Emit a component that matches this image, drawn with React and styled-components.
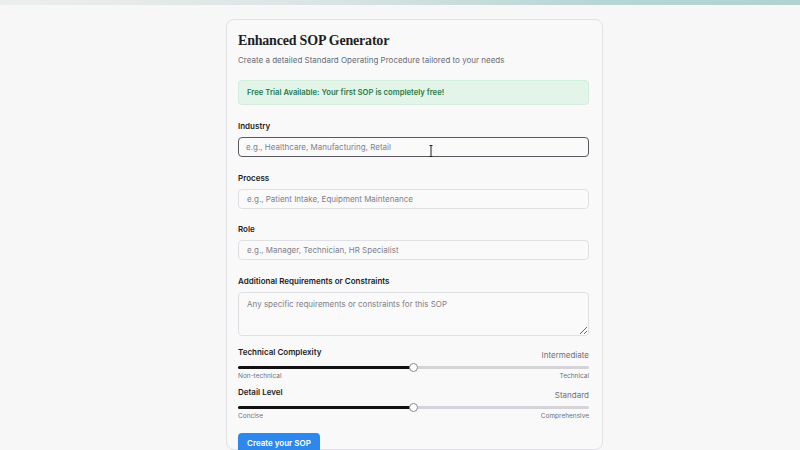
import React from "react";
import styled, { createGlobalStyle } from "styled-components";

const GlobalStyle = createGlobalStyle`
  html, body {
    margin: 0;
    padding: 0;
    background: #f7f7f8;
    font-family: Inter, "Liberation Sans", sans-serif;
    color: #1c1c1f;
  }
  * { box-sizing: border-box; }
`;

const TopBand = styled.div`
  height: 5px;
  background: linear-gradient(90deg, #eceeee 0%, #d9e5e4 40%, #b6d6d4 75%, #b0d3d1 100%);
`;

const Page = styled.div`
  display: flex;
  justify-content: center;
  padding-top: 14px;
  height: 445px;
  overflow: hidden;
`;

const Card = styled.div`
  width: 377px;
  margin-left: 29px;
  background: #f9f9fa;
  border: 1px solid #e2e2e6;
  border-radius: 8px;
  padding: 11px 13px 20px 11px;
  position: relative;
`;

const Title = styled.h1`
  margin: 0;
  font-family: "Liberation Serif", serif;
  font-size: 14px;
  font-weight: bold;
  line-height: 20px;
  letter-spacing: -0.2px;
  color: #1f1f22;
`;

const Subtitle = styled.p`
  margin: 3px 0 0 0;
  font-size: 8px;
  line-height: 12px;
  color: #6b6b72;
`;

const Notice = styled.div`
  margin-top: 14px;
  height: 25px;
  display: flex;
  align-items: center;
  padding: 0 8px;
  background: #e3f5e8;
  border: 1px solid #d2eddb;
  border-radius: 4px;
  font-size: 7.7px;
  font-weight: 600;
  color: #2b7a4b;
`;

const Field = styled.div`
  display: flex;
  flex-direction: column;
  margin-top: ${(p) => p.top || 14.5}px;
`;

const Label = styled.label`
  font-size: 8px;
  font-weight: 600;
  line-height: 12px;
  margin-bottom: 5px;
  color: #1c1c1f;
`;

const Input = styled.input`
  height: 20px;
  width: 100%;
  border: ${(p) => (p.focused ? "1.5px solid #58585e" : "1px solid #e0e0e4")};
  border-radius: 4px;
  background: #fafafb;
  padding: 0 ${(p) => (p.focused ? 7 : 8)}px;
  font-family: Inter, "Liberation Sans", sans-serif;
  font-size: 8px;
  color: #1c1c1f;
  outline: none;
  &::placeholder { color: #808087; }
`;

const TextArea = styled.textarea`
  height: 44px;
  width: 100%;
  border: 1px solid #e0e0e4;
  border-radius: 4px;
  background: #fafafb;
  padding: 5px 8px;
  font-family: Inter, "Liberation Sans", sans-serif;
  font-size: 8px;
  line-height: 12px;
  outline: none;
  resize: vertical;
  &::placeholder { color: #808087; }
`;

const SliderBlock = styled.div`
  margin-top: ${(p) => p.top}px;
`;

const SliderHead = styled.div`
  display: flex;
  justify-content: space-between;
  align-items: flex-start;
`;

const SliderLabel = styled.span`
  font-size: 8px;
  font-weight: 600;
  line-height: 12px;
`;

const SliderValue = styled.span`
  font-size: 8px;
  line-height: 12px;
  margin-top: 3px;
  color: #6f6f76;
`;

const Track = styled.div`
  position: relative;
  height: 3px;
  margin-top: 5px;
  background: #d4d4d8;
  border-radius: 2px;
`;

const Fill = styled.div`
  height: 100%;
  background: #111113;
  border-radius: 2px;
`;

const Thumb = styled.div`
  position: absolute;
  top: 50%;
  width: 9px;
  height: 9px;
  margin-left: -4.5px;
  margin-top: -4.5px;
  border-radius: 50%;
  background: #ffffff;
  border: 1px solid #8a8a90;
`;

const Ends = styled.div`
  display: flex;
  justify-content: space-between;
  margin-top: 2px;
  font-size: 6.5px;
  line-height: 10px;
  color: #6f6f76;
`;

const Button = styled.button`
  margin-top: 12px;
  height: 21px;
  padding: 0 9px;
  border: none;
  border-radius: 4px;
  background: #2e88ec;
  color: #ffffff;
  font-family: Inter, "Liberation Sans", sans-serif;
  font-size: 8px;
  font-weight: 600;
`;

const Caret = styled.span`
  position: absolute;
  left: 202px;
  top: 121px;
  width: 4px;
  height: 12px;
`;

function Slider({ label, value, percent, min, max, top }) {
  return (
    <SliderBlock top={top}>
      <SliderHead>
        <SliderLabel>{label}</SliderLabel>
        <SliderValue>{value}</SliderValue>
      </SliderHead>
      <Track>
        <Fill style={{ width: `${percent}%` }} />
        <Thumb style={{ left: `${percent}%` }} />
      </Track>
      <Ends>
        <span>{min}</span>
        <span>{max}</span>
      </Ends>
    </SliderBlock>
  );
}

export default function App() {
  return (
    <>
      <GlobalStyle />
      <TopBand />
      <Page>
        <Card>
          <Title>Enhanced SOP Generator</Title>
          <Subtitle>Create a detailed Standard Operating Procedure tailored to your needs</Subtitle>
          <Notice>Free Trial Available: Your first SOP is completely free!</Notice>

          <Field top={15}>
            <Label>Industry</Label>
            <Input focused placeholder="e.g., Healthcare, Manufacturing, Retail" />
          </Field>
          <Field>
            <Label>Process</Label>
            <Input placeholder="e.g., Patient Intake, Equipment Maintenance" />
          </Field>
          <Field>
            <Label>Role</Label>
            <Input placeholder="e.g., Manager, Technician, HR Specialist" />
          </Field>
          <Field>
            <Label>Additional Requirements or Constraints</Label>
            <TextArea placeholder="Any specific requirements or constraints for this SOP" />
          </Field>

          <Slider
            top={10}
            label="Technical Complexity"
            value="Intermediate"
            percent={50}
            min="Non-technical"
            max="Technical"
          />
          <Slider
            top={5}
            label="Detail Level"
            value="Standard"
            percent={50}
            min="Concise"
            max="Comprehensive"
          />

          <Button>Create your SOP</Button>

          <Caret>
            <svg width="4" height="12" viewBox="0 0 4 12">
              <path d="M0.5 0.5h3M2 0.5v11M0.5 11.5h3" stroke="#222" strokeWidth="1" fill="none" />
            </svg>
          </Caret>
        </Card>
      </Page>
    </>
  );
}
